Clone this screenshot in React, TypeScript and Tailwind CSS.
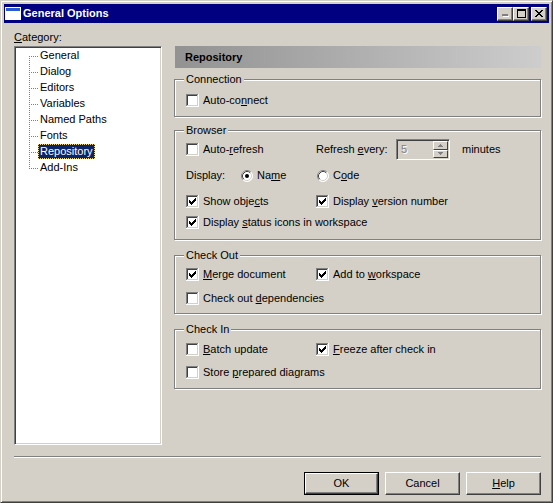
import React from "react";

const CHECK_COLS = [2, 3, 4, 3, 2, 1, 0];
const X_ROWS = [
  [0, 6],
  [1, 5],
  [2, 4],
  [3, 3],
  [2, 4],
  [1, 5],
  [0, 6],
];

function CheckBox({ checked = false }: { checked?: boolean }) {
  return (
    <svg width="13" height="13" viewBox="0 0 13 13" shapeRendering="crispEdges" className="block shrink-0">
      <rect x="0" y="0" width="13" height="13" fill="#ffffff" />
      <rect x="0" y="0" width="12" height="1" fill="#808080" />
      <rect x="0" y="0" width="1" height="12" fill="#808080" />
      <rect x="1" y="1" width="10" height="1" fill="#404040" />
      <rect x="1" y="1" width="1" height="10" fill="#404040" />
      <rect x="1" y="11" width="11" height="1" fill="#d4d0c8" />
      <rect x="11" y="1" width="1" height="11" fill="#d4d0c8" />
      {checked &&
        CHECK_COLS.map((r, i) => (
          <rect key={i} x={3 + i} y={3 + r} width="1" height="3" fill="#000000" />
        ))}
    </svg>
  );
}

function Radio({ checked = false }: { checked?: boolean }) {
  return (
    <svg width="12" height="12" viewBox="0 0 12 12" className="block shrink-0">
      <circle cx="6" cy="6" r="5.5" fill="#ffffff" />
      <path d="M2.11 9.89 A5.5 5.5 0 0 1 9.89 2.11" fill="none" stroke="#808080" />
      <path d="M9.89 2.11 A5.5 5.5 0 0 1 2.11 9.89" fill="none" stroke="#ffffff" />
      <path d="M2.82 9.18 A4.5 4.5 0 0 1 9.18 2.82" fill="none" stroke="#404040" />
      <path d="M9.18 2.82 A4.5 4.5 0 0 1 2.82 9.18" fill="none" stroke="#d4d0c8" />
      {checked && <circle cx="6" cy="6" r="2" fill="#000000" />}
    </svg>
  );
}

function Opt({ checked, children }: { checked?: boolean; children: React.ReactNode }) {
  return (
    <div className="flex items-center gap-[4px] h-[13px]">
      <CheckBox checked={checked} />
      <span className="leading-[13px] whitespace-nowrap">{children}</span>
    </div>
  );
}

function RadioOpt({ checked, children }: { checked?: boolean; children: React.ReactNode }) {
  return (
    <div className="flex items-center gap-[4px] h-[13px]">
      <Radio checked={checked} />
      <span className="leading-[13px] whitespace-nowrap">{children}</span>
    </div>
  );
}

function Group({
  title,
  className,
  children,
}: {
  title: string;
  className: string;
  children: React.ReactNode;
}) {
  return (
    <div
      className={`relative w-full border border-[#808080] shadow-[1px_1px_0_#ffffff,inset_1px_1px_0_#ffffff] pl-[11px] ${className}`}
    >
      <span className="absolute left-[9px] top-[-7px] bg-[#d4d0c8] px-[2px] leading-[13px] whitespace-nowrap">
        {title}
      </span>
      {children}
    </div>
  );
}

function TitleBtn({ children }: { children: React.ReactNode }) {
  return (
    <div className="w-[16px] h-[14px] bg-[#d4d0c8] border border-white border-r-[#404040] border-b-[#404040] shadow-[inset_-1px_-1px_0_#808080] flex items-center justify-center">
      {children}
    </div>
  );
}

function Btn({ children, def = false }: { children: React.ReactNode; def?: boolean }) {
  return (
    <div className={`w-[75px] h-[23px] ${def ? "border border-black" : ""}`}>
      <div className="w-full h-full flex items-center justify-center border border-white border-r-[#404040] border-b-[#404040] shadow-[inset_-1px_-1px_0_#808080,inset_1px_1px_0_#d4d0c8] leading-[13px]">
        {children}
      </div>
    </div>
  );
}

const TREE = ["General", "Dialog", "Editors", "Variables", "Named Paths", "Fonts", "Repository", "Add-Ins"];

export default function App() {
  return (
    <div className="w-[553px] h-[503px] bg-[#d4d0c8] border border-[#d4d0c8] border-r-[#404040] border-b-[#404040] shadow-[inset_1px_1px_0_#ffffff,inset_-1px_-1px_0_#808080] p-[3px] flex flex-col font-['Liberation_Sans',Arial,sans-serif] text-[11px] text-black overflow-hidden">
      {/* Title bar */}
      <div className="h-[19px] shrink-0 bg-[#000080] flex items-center pl-[1px] pr-[2px]">
        <svg width="16" height="13" viewBox="0 0 16 13" shapeRendering="crispEdges" className="block shrink-0">
          <rect x="0" y="0" width="16" height="13" fill="#ffffff" />
          <rect x="1" y="1" width="14" height="3" fill="#2a5ad0" />
          <rect x="1" y="4" width="14" height="8" fill="#ffffff" />
        </svg>
        <span className="ml-[2px] text-white font-bold leading-[13px] whitespace-nowrap">General Options</span>
        <div className="ml-auto flex items-center">
          <TitleBtn>
            <svg width="8" height="7" viewBox="0 0 8 7" shapeRendering="crispEdges" className="block">
              <rect x="2" y="6" width="6" height="1" fill="#ffffff" />
              <rect x="1" y="5" width="6" height="1" fill="#808080" />
              <rect x="1" y="4" width="6" height="1" fill="#808080" />
            </svg>
          </TitleBtn>
          <TitleBtn>
            <svg width="9" height="9" viewBox="0 0 9 9" shapeRendering="crispEdges" className="block">
              <rect x="0" y="0" width="9" height="2" fill="#000" />
              <rect x="0" y="0" width="1" height="9" fill="#000" />
              <rect x="8" y="0" width="1" height="9" fill="#000" />
              <rect x="0" y="8" width="9" height="1" fill="#000" />
            </svg>
          </TitleBtn>
          <div className="ml-[2px]">
            <TitleBtn>
              <svg width="8" height="7" viewBox="0 0 8 7" shapeRendering="crispEdges" className="block">
                {X_ROWS.map(([a, b], i) => (
                  <g key={i}>
                    <rect x={a} y={i} width="2" height="1" fill="#000" />
                    {a !== b && <rect x={b} y={i} width="2" height="1" fill="#000" />}
                  </g>
                ))}
              </svg>
            </TitleBtn>
          </div>
        </div>
      </div>

      {/* Main */}
      <div className="h-[422px] shrink-0 flex pl-[10px] pr-[8px] gap-[12px]">
        {/* Left column */}
        <div className="w-[148px] shrink-0 flex flex-col">
          <div className="h-[23px] pt-[8px] leading-[13px]">
            <u>C</u>ategory:
          </div>
          <div className="h-[399px] bg-white border border-[#808080] border-r-white border-b-white shadow-[inset_1px_1px_0_#404040,inset_-1px_-1px_0_#d4d0c8] p-[1px]">
            <div className="flex">
              <svg width="9" height="128" viewBox="0 0 9 128" shapeRendering="crispEdges" className="block shrink-0 ml-[13px]">
                <line x1="0.5" y1="8" x2="0.5" y2="121" stroke="#808080" strokeDasharray="1 1" />
                {TREE.map((_, i) => (
                  <line key={i} x1="2" y1={8.5 + 16 * i} x2="9" y2={8.5 + 16 * i} stroke="#808080" strokeDasharray="1 1" />
                ))}
              </svg>
              <div className="flex flex-col">
                {TREE.map((t) => (
                  <div key={t} className="h-[16px] flex items-start">
                    {t === "Repository" ? (
                      <span className="h-[15px] px-[1px] leading-[13px] bg-[#0a246a] text-white border border-dotted border-[#f0d890] whitespace-nowrap">
                        {t}
                      </span>
                    ) : (
                      <span className="h-[15px] px-[1px] leading-[13px] border border-transparent whitespace-nowrap">{t}</span>
                    )}
                  </div>
                ))}
              </div>
            </div>
          </div>
        </div>

        {/* Right column */}
        <div className="flex-1 flex flex-col pt-[23px]">
          <div className="h-[22px] ml-[1px] bg-linear-to-r from-[#929292] to-[#cdcdcd] flex items-center pl-[10px] font-bold leading-[13px]">
            Repository
          </div>

          <Group title="Connection" className="mt-[11px] pt-[14px] pb-[9px]">
            <Opt>
              Auto-co<u>n</u>nect
            </Opt>
          </Group>

          <Group title="Browser" className="mt-[13px] pt-[8px] pb-[10px]">
            <div className="h-[21px] flex items-center">
              <div className="w-[130px] shrink-0">
                <Opt>
                  Auto-<u>r</u>efresh
                </Opt>
              </div>
              <span className="w-[80px] shrink-0 leading-[13px] whitespace-nowrap">
                Refresh <u>e</u>very:
              </span>
              <div className="w-[54px] h-[21px] shrink-0 flex border border-[#808080] border-r-white border-b-white shadow-[inset_1px_1px_0_#404040,inset_-1px_-1px_0_#d4d0c8] py-[1px] pr-[1px]">
                <span className="flex-1 pl-[4px] leading-[17px] text-[#808080] [text-shadow:1px_1px_0_#ffffff]">5</span>
                <div className="w-[15px] flex flex-col">
                  <div className="flex-1 bg-[#d4d0c8] border border-white border-r-[#404040] border-b-[#404040] flex items-center justify-center">
                    <svg width="5" height="3" viewBox="0 0 5 3" shapeRendering="crispEdges" className="block">
                      <rect x="2" y="0" width="1" height="1" fill="#808080" />
                      <rect x="1" y="1" width="3" height="1" fill="#808080" />
                      <rect x="0" y="2" width="5" height="1" fill="#808080" />
                    </svg>
                  </div>
                  <div className="flex-1 bg-[#d4d0c8] border border-white border-r-[#404040] border-b-[#404040] flex items-center justify-center">
                    <svg width="5" height="3" viewBox="0 0 5 3" shapeRendering="crispEdges" className="block">
                      <rect x="0" y="0" width="5" height="1" fill="#808080" />
                      <rect x="1" y="1" width="3" height="1" fill="#808080" />
                      <rect x="2" y="2" width="1" height="1" fill="#808080" />
                    </svg>
                  </div>
                </div>
              </div>
              <span className="ml-[12px] leading-[13px]">minutes</span>
            </div>
            <div className="h-[13px] mt-[9px] flex items-center">
              <span className="w-[55px] shrink-0 leading-[13px]">Display:</span>
              <div className="w-[75px] shrink-0">
                <RadioOpt checked>
                  Na<u>m</u>e
                </RadioOpt>
              </div>
              <div className="ml-[1px]">
                <RadioOpt>
                  C<u>o</u>de
                </RadioOpt>
              </div>
            </div>
            <div className="h-[13px] mt-[13px] flex items-center">
              <div className="w-[130px] shrink-0">
                <Opt checked>
                  Show obje<u>c</u>ts
                </Opt>
              </div>
              <Opt checked>
                Display <u>v</u>ersion number
              </Opt>
            </div>
            <div className="mt-[8px]">
              <Opt checked>
                Display <u>s</u>tatus icons in workspace
              </Opt>
            </div>
          </Group>

          <Group title="Check Out" className="mt-[15px] pt-[12px] pb-[8px]">
            <div className="h-[13px] flex items-center">
              <div className="w-[130px] shrink-0">
                <Opt checked>
                  <u>M</u>erge document
                </Opt>
              </div>
              <Opt checked>
                Add to <u>w</u>orkspace
              </Opt>
            </div>
            <div className="mt-[11px]">
              <Opt>
                Check out <u>d</u>ependencies
              </Opt>
            </div>
          </Group>

          <Group title="Check In" className="mt-[15px] pt-[13px] pb-[9px]">
            <div className="h-[13px] flex items-center">
              <div className="w-[130px] shrink-0">
                <Opt>
                  <u>B</u>atch update
                </Opt>
              </div>
              <Opt checked>
                <u>F</u>reeze after check in
              </Opt>
            </div>
            <div className="mt-[10px]">
              <Opt>
                Store <u>p</u>repared diagrams
              </Opt>
            </div>
          </Group>
        </div>
      </div>

      {/* Separator */}
      <div className="h-[2px] shrink-0 mt-[11px] ml-[10px] mr-[8px] border-t border-t-[#808080] border-b border-b-white" />

      {/* Buttons */}
      <div className="h-[23px] shrink-0 mt-[14px] mr-[8px] flex justify-end gap-[6px]">
        <Btn def>OK</Btn>
        <Btn>Cancel</Btn>
        <Btn>
          <span>
            <u>H</u>elp
          </span>
        </Btn>
      </div>
    </div>
  );
}
